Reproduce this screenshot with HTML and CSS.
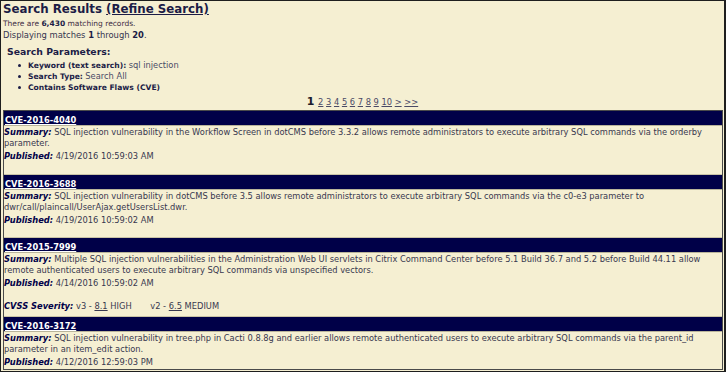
FILE: index.html
```html
<!DOCTYPE html>
<html>
<head>
<meta charset="utf-8">
<link rel="stylesheet" href="styles.css">
</head>
<body>
<div class="frame">
  <h1 class="title">Search Results <a href="#" class="title-link">(Refine Search)</a></h1>
  <div class="count">There are <b>6,430</b> matching records.</div>
  <div class="display">Displaying matches <b>1</b> through <b>20</b>.</div>
  <div class="params">
    <div class="params-title">Search Parameters:</div>
    <ul class="plist">
      <li><b>Keyword (text search):</b> <span class="pval">sql injection</span></li>
      <li><b>Search Type:</b> <span class="pval">Search All</span></li>
      <li><b>Contains Software Flaws (CVE)</b></li>
    </ul>
  </div>
  <div class="pager"><b class="cur">1</b> <a href="#">2</a> <a href="#">3</a> <a href="#">4</a> <a href="#">5</a> <a href="#">6</a> <a href="#">7</a> <a href="#">8</a> <a href="#">9</a> <a href="#">10</a> <a href="#">&gt;</a> <a href="#">&gt;&gt;</a></div>
  <div class="results">
    <div class="row">
      <div class="head"><a href="#">CVE-2016-4040</a></div>
      <div class="body">
        <div class="summary"><span class="lbl">Summary:</span> SQL injection vulnerability in the Workflow Screen in dotCMS before 3.3.2 allows remote administrators to execute arbitrary SQL commands via the orderby parameter.</div>
        <div class="pub"><span class="lbl">Published:</span> 4/19/2016 10:59:03 AM</div>
        <div class="spacer"></div>
      </div>
    </div>
    <div class="row">
      <div class="head"><a href="#">CVE-2016-3688</a></div>
      <div class="body">
        <div class="summary"><span class="lbl">Summary:</span> SQL injection vulnerability in dotCMS before 3.5 allows remote administrators to execute arbitrary SQL commands via the c0-e3 parameter to dwr/call/plaincall/UserAjax.getUsersList.dwr.</div>
        <div class="pub"><span class="lbl">Published:</span> 4/19/2016 10:59:02 AM</div>
        <div class="spacer"></div>
      </div>
    </div>
    <div class="row">
      <div class="head"><a href="#">CVE-2015-7999</a></div>
      <div class="body">
        <div class="summary"><span class="lbl">Summary:</span> Multiple SQL injection vulnerabilities in the Administration Web UI servlets in Citrix Command Center before 5.1 Build 36.7 and 5.2 before Build 44.11 allow remote authenticated users to execute arbitrary SQL commands via unspecified vectors.</div>
        <div class="pub"><span class="lbl">Published:</span> 4/14/2016 10:59:02 AM</div>
        <div class="spacer"></div>
        <div class="cvss"><span class="lbl">CVSS Severity:</span> v3 - <a href="#">8.1</a> HIGH <span class="v2">v2 - <a href="#">6.5</a> MEDIUM</span></div>
      </div>
    </div>
    <div class="row last">
      <div class="head"><a href="#">CVE-2016-3172</a></div>
      <div class="body">
        <div class="summary"><span class="lbl">Summary:</span> SQL injection vulnerability in tree.php in Cacti 0.8.8g and earlier allows remote authenticated users to execute arbitrary SQL commands via the parent_id parameter in an item_edit action.</div>
        <div class="pub"><span class="lbl">Published:</span> 4/12/2016 12:59:03 PM</div>
      </div>
    </div>
  </div>
</div>
</body>
</html>
```
FILE: styles.css
```css
html, body {
  margin: 0;
  padding: 0;
  background: #f5efd2;
}
body {
  font-family: "DejaVu Sans", Verdana, sans-serif;
  color: #38384f;
}
.frame {
  box-sizing: border-box;
  width: 726px;
  height: 372px;
  overflow: hidden;
  border-top: 1px solid #1e1e1e;
  border-left: 1px solid #1e1e1e;
  border-bottom: 1px solid #1e1e1e;
  border-right: 2px solid #1e1e1e;
  background: #f5efd2;
}
.title {
  margin: 0;
  padding-left: 2px;
  font-size: 11.8px;
  line-height: 16px;
  font-weight: bold;
  color: #1c1c46;
}
.title-link {
  color: #1c1c46;
  text-decoration: underline;
}
.count {
  padding-left: 2px;
  font-size: 7.5px;
  line-height: 13px;
  color: #3d2c42;
}
.display {
  padding-left: 2px;
  font-size: 8.4px;
  line-height: 11px;
  color: #34344f;
}
.count b, .display b {
  color: #1c1c46;
}
.params {
  padding-left: 6px;
  margin-top: 5px;
}
.params-title {
  font-size: 9.3px;
  font-weight: bold;
  line-height: 11px;
  color: #1c1c46;
}
.plist {
  list-style: none;
  margin: 3px 0 0 0;
  padding: 0 0 0 21px;
  font-size: 7.6px;
  line-height: 11px;
  color: #1c1c46;
}
.plist li {
  position: relative;
}
.plist li::before {
  content: "";
  position: absolute;
  left: -10px;
  top: 4px;
  width: 3px;
  height: 3px;
  border-radius: 50%;
  background: #1c1c46;
}
.pval {
  font-size: 8.3px;
  color: #4a4a66;
}
.pager {
  margin-top: 3px;
  text-align: center;
  line-height: 12px;
  font-size: 8.3px;
  padding-left: 0;
}
.pager .cur {
  font-size: 11px;
  color: #1c1c2c;
  margin-right: 1px;
}
.pager a {
  color: #4a4a66;
  text-decoration: underline;
}
.results {
  margin: 2px 1px 0 2px;
  border: 1px solid #4a4a4a;
}
.head {
  background: #000048;
  height: 14px;
  line-height: 14px;
  padding-left: 1px;
  border-bottom: 1px solid #b9b49a;
}
.head a {
  color: #ffffff;
  font-weight: bold;
  font-size: 8.3px;
  text-decoration: underline;
}
.body {
  padding: 1px 0 0 0;
  font-size: 8.3px;
  color: #38384f;
}
.summary {
  line-height: 11px;
}
.pub {
  margin-top: 2px;
  line-height: 11px;
}
.lbl {
  font-weight: bold;
  font-style: italic;
  color: #000048;
}
.spacer {
  height: 12px;
}
.row + .row {
  border-top: 1px solid #c9c3a6;
}
.row:nth-child(2) .spacer {
  height: 11px;
}
.cvss {
  line-height: 11px;
  padding-bottom: 4px;
}
.cvss a {
  color: #38384f;
  text-decoration: underline;
}
.v2 {
  margin-left: 16px;
}
.last .body {
  padding-bottom: 1px;
}
```
